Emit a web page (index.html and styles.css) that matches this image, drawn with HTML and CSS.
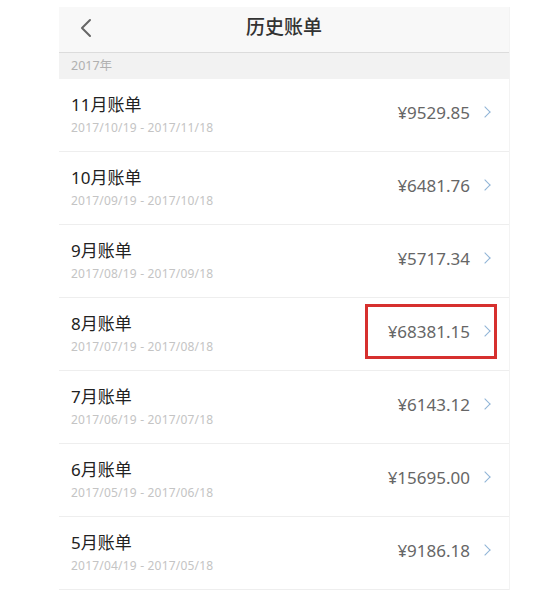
FILE: index.html
```html
<!DOCTYPE html>
<html lang="zh-CN">
<head>
<meta charset="utf-8">
<title>历史账单</title>
<link rel="stylesheet" href="styles.css">
</head>
<body>
<div class="screen">
  <header class="topbar">
    <svg class="back" width="14" height="20" viewBox="0 0 14 20"><path d="M11 2 L3 10 L11 18" fill="none" stroke="#666" stroke-width="2" stroke-linecap="round" stroke-linejoin="round"/></svg>
    <h1 class="title">历史账单</h1>
  </header>
  <div class="year">2017年</div>
  <ul class="bills">
    <li class="bill"><div class="info"><div class="name">11月账单</div><div class="range">2017/10/19 - 2017/11/18</div></div><div class="amount">¥9529.85</div><span class="chev"></span></li>
    <li class="bill"><div class="info"><div class="name">10月账单</div><div class="range">2017/09/19 - 2017/10/18</div></div><div class="amount">¥6481.76</div><span class="chev"></span></li>
    <li class="bill"><div class="info"><div class="name">9月账单</div><div class="range">2017/08/19 - 2017/09/18</div></div><div class="amount">¥5717.34</div><span class="chev"></span></li>
    <li class="bill"><div class="info"><div class="name">8月账单</div><div class="range">2017/07/19 - 2017/08/18</div></div><div class="amount">¥68381.15</div><span class="chev"></span><span class="mark"></span></li>
    <li class="bill"><div class="info"><div class="name">7月账单</div><div class="range">2017/06/19 - 2017/07/18</div></div><div class="amount">¥6143.12</div><span class="chev"></span></li>
    <li class="bill"><div class="info"><div class="name">6月账单</div><div class="range">2017/05/19 - 2017/06/18</div></div><div class="amount">¥15695.00</div><span class="chev"></span></li>
    <li class="bill"><div class="info"><div class="name">5月账单</div><div class="range">2017/04/19 - 2017/05/18</div></div><div class="amount">¥9186.18</div><span class="chev"></span></li>
  </ul>
</div>
</body>
</html>
```
FILE: styles.css
```css
* { box-sizing: border-box; }
html, body { margin: 0; padding: 0; background: #fff; }
body {
  font-family: "Noto Sans", "Noto Sans CJK SC", sans-serif;
  color: #333;
}
.screen {
  margin: 7px 0 0 59px;
  width: 451px;
  border-right: 1px solid #f3f3f3;
}
.topbar {
  height: 46px;
  background: #f8f8f8;
  border-bottom: 1px solid #dcdcdc;
  display: flex;
  align-items: center;
  justify-content: center;
  position: relative;
}
.back {
  position: absolute;
  left: 20px;
  top: 11px;
}
.title {
  margin: 0 0 6px 0;
  font-size: 19px;
  font-weight: 500;
  color: #333;
  line-height: 24px;
}
.year {
  height: 26px;
  background: #f2f2f2;
  padding-left: 12px;
  font-size: 12.5px;
  line-height: 26px;
  color: #b0b0b0;
}
.bills { list-style: none; margin: 0; padding: 0; }
.bill {
  position: relative;
  height: 73px;
  border-bottom: 1px solid #eeeeee;
  display: flex;
  align-items: center;
  padding: 0 20px 6px 12px;
}
.info {
  flex: 1;
  display: flex;
  flex-direction: column;
  gap: 4px;
  padding-top: 5px;
}
.name {
  font-size: 17px;
  line-height: 22px;
  color: #222;
}
.range {
  font-size: 12px;
  letter-spacing: 0.2px;
  line-height: 16px;
  color: #c4c4c4;
}
.amount {
  font-size: 17px;
  color: #666;
  margin-right: 11px;
}
.chev {
  width: 8px;
  height: 8px;
  border-top: 1.6px solid #8fb4d6;
  border-right: 1.6px solid #8fb4d6;
  transform: rotate(45deg);
}
.mark {
  position: absolute;
  right: 12px;
  top: 6px;
  width: 132px;
  height: 55px;
  border: 3px solid #d6302e;
}
```
